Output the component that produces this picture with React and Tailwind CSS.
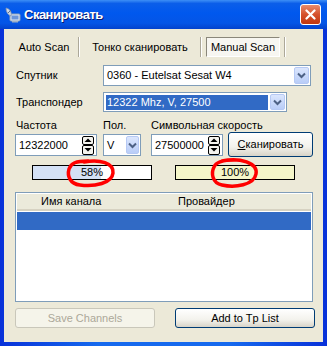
import React from "react";

const Chevron = () => (
  <svg width="9" height="7" viewBox="0 0 9 7">
    <path d="M1 1.5 L4.5 5 L8 1.5" fill="none" stroke="#4d6185" strokeWidth="2" />
  </svg>
);

const DropButton = ({ className = "" }) => (
  <div
    className={`flex items-center justify-center rounded-[2px] border border-[#b6c9f4] bg-[linear-gradient(to_bottom,#dbe6fd,#b9cdf8)] ${className}`}
  >
    <Chevron />
  </div>
);

const Spinner = () => (
  <div className="mr-[2px] flex h-[19px] w-[12px] flex-col">
    {["M1.5 5 L5 1.5 L8.5 5 Z", "M1.5 1 L5 4.5 L8.5 1 Z"].map((d) => (
      <div
        key={d}
        className="flex h-[9.5px] items-center justify-center rounded-[2px] border border-black bg-[#f4f3ee]"
      >
        <svg width="10" height="6" viewBox="0 0 10 6">
          <path d={d} fill="#000" />
        </svg>
      </div>
    ))}
  </div>
);

const Separator = () => (
  <div className="flex h-[20px] w-[2px]">
    <div className="w-px bg-[#aca899]" />
    <div className="w-px bg-white" />
  </div>
);

function TitleIcon() {
  return (
    <svg width="16" height="16" viewBox="0 0 16 16">
      <rect x="5" y="7" width="10" height="7" rx="1" fill="#dfe6ef" stroke="#8aa0bb" />
      <rect x="6.5" y="8.5" width="7" height="4" fill="#6c95d8" />
      <path d="M1 1 C 5 2, 7 5, 6 9 C 3 8, 1 5, 1 1 Z" fill="#cfd8e6" stroke="#7f93b0" strokeWidth="0.8" />
      <path d="M3 6 L6 3" stroke="#5a6f90" strokeWidth="1" />
      <rect x="7" y="14" width="6" height="1.5" fill="#9fb0c6" />
    </svg>
  );
}

export default function App() {
  return (
    <div className="relative h-[346px] w-[327px] bg-white font-['Liberation_Sans',Arial,sans-serif] text-[11px] text-black">
      <div className="flex h-full flex-col bg-[linear-gradient(to_right,#0831d9,#166aee_30%,#166aee_70%,#0831d9)]">
        {/* title bar */}
        <div className="flex h-[29px] items-center bg-[linear-gradient(to_bottom,#3d8ff6_0%,#0b5ee9_12%,#0058ee_45%,#0455e6_80%,#0342cc_100%)] pl-[5px] pr-[6px]">
          <TitleIcon />
          <span className="ml-[3px] text-[13px] font-bold tracking-[-0.5px] text-white [text-shadow:1px_1px_0_#0a1a70]">
            Сканировать
          </span>
          <div className="ml-auto flex h-[21px] w-[21px] items-center justify-center rounded-[3px] border border-white bg-[linear-gradient(to_bottom,#e88b6c,#d5512c_50%,#c1360f)]">
            <svg width="11" height="11" viewBox="0 0 11 11">
              <path d="M1.5 1.5 L9.5 9.5 M9.5 1.5 L1.5 9.5" stroke="#fff" strokeWidth="2.2" strokeLinecap="round" />
            </svg>
          </div>
        </div>

        {/* client area */}
        <div className="mx-[4px] mb-[4px] flex flex-1 flex-col bg-[#ece9d8] pl-[11px]">
          {/* tabs */}
          <div className="-ml-[5px] mt-[8px] flex h-[20px] items-center">
            <div className="w-[68px] text-center">Auto Scan</div>
            <Separator />
            <div className="w-[120px] text-center">Тонко сканировать</div>
            <Separator />
            <div className="ml-[4px] flex h-[20px] w-[74px] items-center justify-center border border-t-[#8a877a] border-l-[#8a877a] border-b-white border-r-white bg-[#f7f6f1]">
              Manual Scan
            </div>
            <div className="ml-[4px]">
              <Separator />
            </div>
          </div>

          {/* satellite */}
          <div className="mt-[8px] flex h-[21px] items-center">
            <div className="w-[88px] pl-[1px]">Спутник</div>
            <div className="flex h-[21px] w-[208px] items-center border border-[#7f9db9] bg-white pl-[3px]">
              <span className="flex-1">0360 - Eutelsat Sesat W4</span>
              <DropButton className="mr-px h-[17px] w-[15px]" />
            </div>
          </div>

          {/* transponder */}
          <div className="mt-[6px] flex h-[20px] items-center">
            <div className="w-[88px] pl-[1px]">Транспондер</div>
            <div className="flex h-[20px] w-[184px] items-center border border-[#7f9db9] bg-white pl-[2px]">
              <span className="mr-[2px] flex h-[15px] flex-1 items-center bg-[#316ac5] pl-px text-white">
                12322 Mhz, V, 27500
              </span>
              <DropButton className="mr-px h-[16px] w-[15px]" />
            </div>
          </div>

          {/* frequency / pol / symbol rate */}
          <div className="mt-[7px] flex items-start">
            <div className="flex w-[82px] flex-col">
              <div className="h-[13px] pl-px leading-[13px]">Частота</div>
              <div className="mt-[2px] flex h-[22px] items-center border border-[#7f9db9] bg-white pl-[3px]">
                <span className="flex-1">12322000</span>
                <Spinner />
              </div>
            </div>
            <div className="ml-[6px] flex w-[38px] flex-col">
              <div className="h-[13px] leading-[13px]">Пол.</div>
              <div className="mt-[2px] flex h-[22px] items-center border border-[#7f9db9] bg-white pl-[3px]">
                <span className="flex-1">V</span>
                <DropButton className="mr-px h-[18px] w-[13px]" />
              </div>
            </div>
            <div className="ml-[10px] flex w-[72px] flex-col">
              <div className="h-[13px] whitespace-nowrap leading-[13px]">Символьная скорость</div>
              <div className="mt-[2px] flex h-[22px] items-center border border-[#7f9db9] bg-white pl-[3px]">
                <span className="flex-1">27500000</span>
                <Spinner />
              </div>
            </div>
            <div className="ml-[5px] flex w-[85px] flex-col">
              <div className="h-[13px]" />
              <button
                type="button"
                className="flex h-[25px] items-center justify-center rounded-[3px] border border-[#003c74] bg-[linear-gradient(to_bottom,#ffffff,#f3f2ec_60%,#d8d4c8)]"
              >
                <span className="underline">С</span>канировать
              </button>
            </div>
          </div>

          {/* progress */}
          <div className="mt-[8px] flex h-[15px]">
            <div className="relative ml-[17px] flex h-[15px] w-[120px] items-center justify-center border border-black bg-white">
              <div className="absolute inset-y-0 left-0 w-[58%] bg-[#d4e1f6]" />
              <span className="relative">58%</span>
            </div>
            <div className="ml-[23px] flex h-[15px] w-[120px] items-center justify-center border border-black bg-[#f5f6c9]">
              100%
            </div>
          </div>

          {/* list */}
          <div className="mt-[12px] flex h-[110px] w-[298px] flex-col border border-[#7f9db9] bg-white p-px">
            <div className="flex h-[17px] items-center border-b-2 border-[#d6d2c2] bg-[#ebeadb]">
              <span className="w-[161px] pl-[24px]">Имя канала</span>
              <span>Провайдер</span>
            </div>
            <div className="mt-[1px] h-[18px] bg-[#316ac5]" />
          </div>

          {/* buttons */}
          <div className="mt-[6px] flex h-[20px]">
            <button
              type="button"
              disabled
              className="h-[20px] w-[140px] rounded-[3px] border border-[#c9c7ba] bg-[#f5f4ea] text-[#aca899]"
            >
              Save Channels
            </button>
            <button
              type="button"
              className="ml-[20px] h-[20px] w-[140px] rounded-[3px] border border-[#003c74] bg-[linear-gradient(to_bottom,#ffffff,#f3f2ec_60%,#d8d4c8)]"
            >
              Add to Tp List
            </button>
          </div>
        </div>
      </div>

      {/* red annotation loops */}
      <svg className="pointer-events-none absolute left-0 top-0" width="327" height="346" viewBox="0 0 327 346">
        <path
          d="M 84 162 C 100 159, 114 163, 113 173 C 112 183, 95 187, 80 185 C 70 184, 67 176, 69 169 C 71 163, 76 161, 88 161"
          fill="none"
          stroke="#ff0000"
          strokeWidth="3.5"
          strokeLinecap="round"
        />
        <path
          d="M 222 161 C 240 157, 258 163, 256 174 C 254 185, 235 188, 222 185 C 212 183, 211 173, 214 167 C 216 162, 222 160, 234 160"
          fill="none"
          stroke="#ff0000"
          strokeWidth="3.5"
          strokeLinecap="round"
        />
      </svg>
    </div>
  );
}
